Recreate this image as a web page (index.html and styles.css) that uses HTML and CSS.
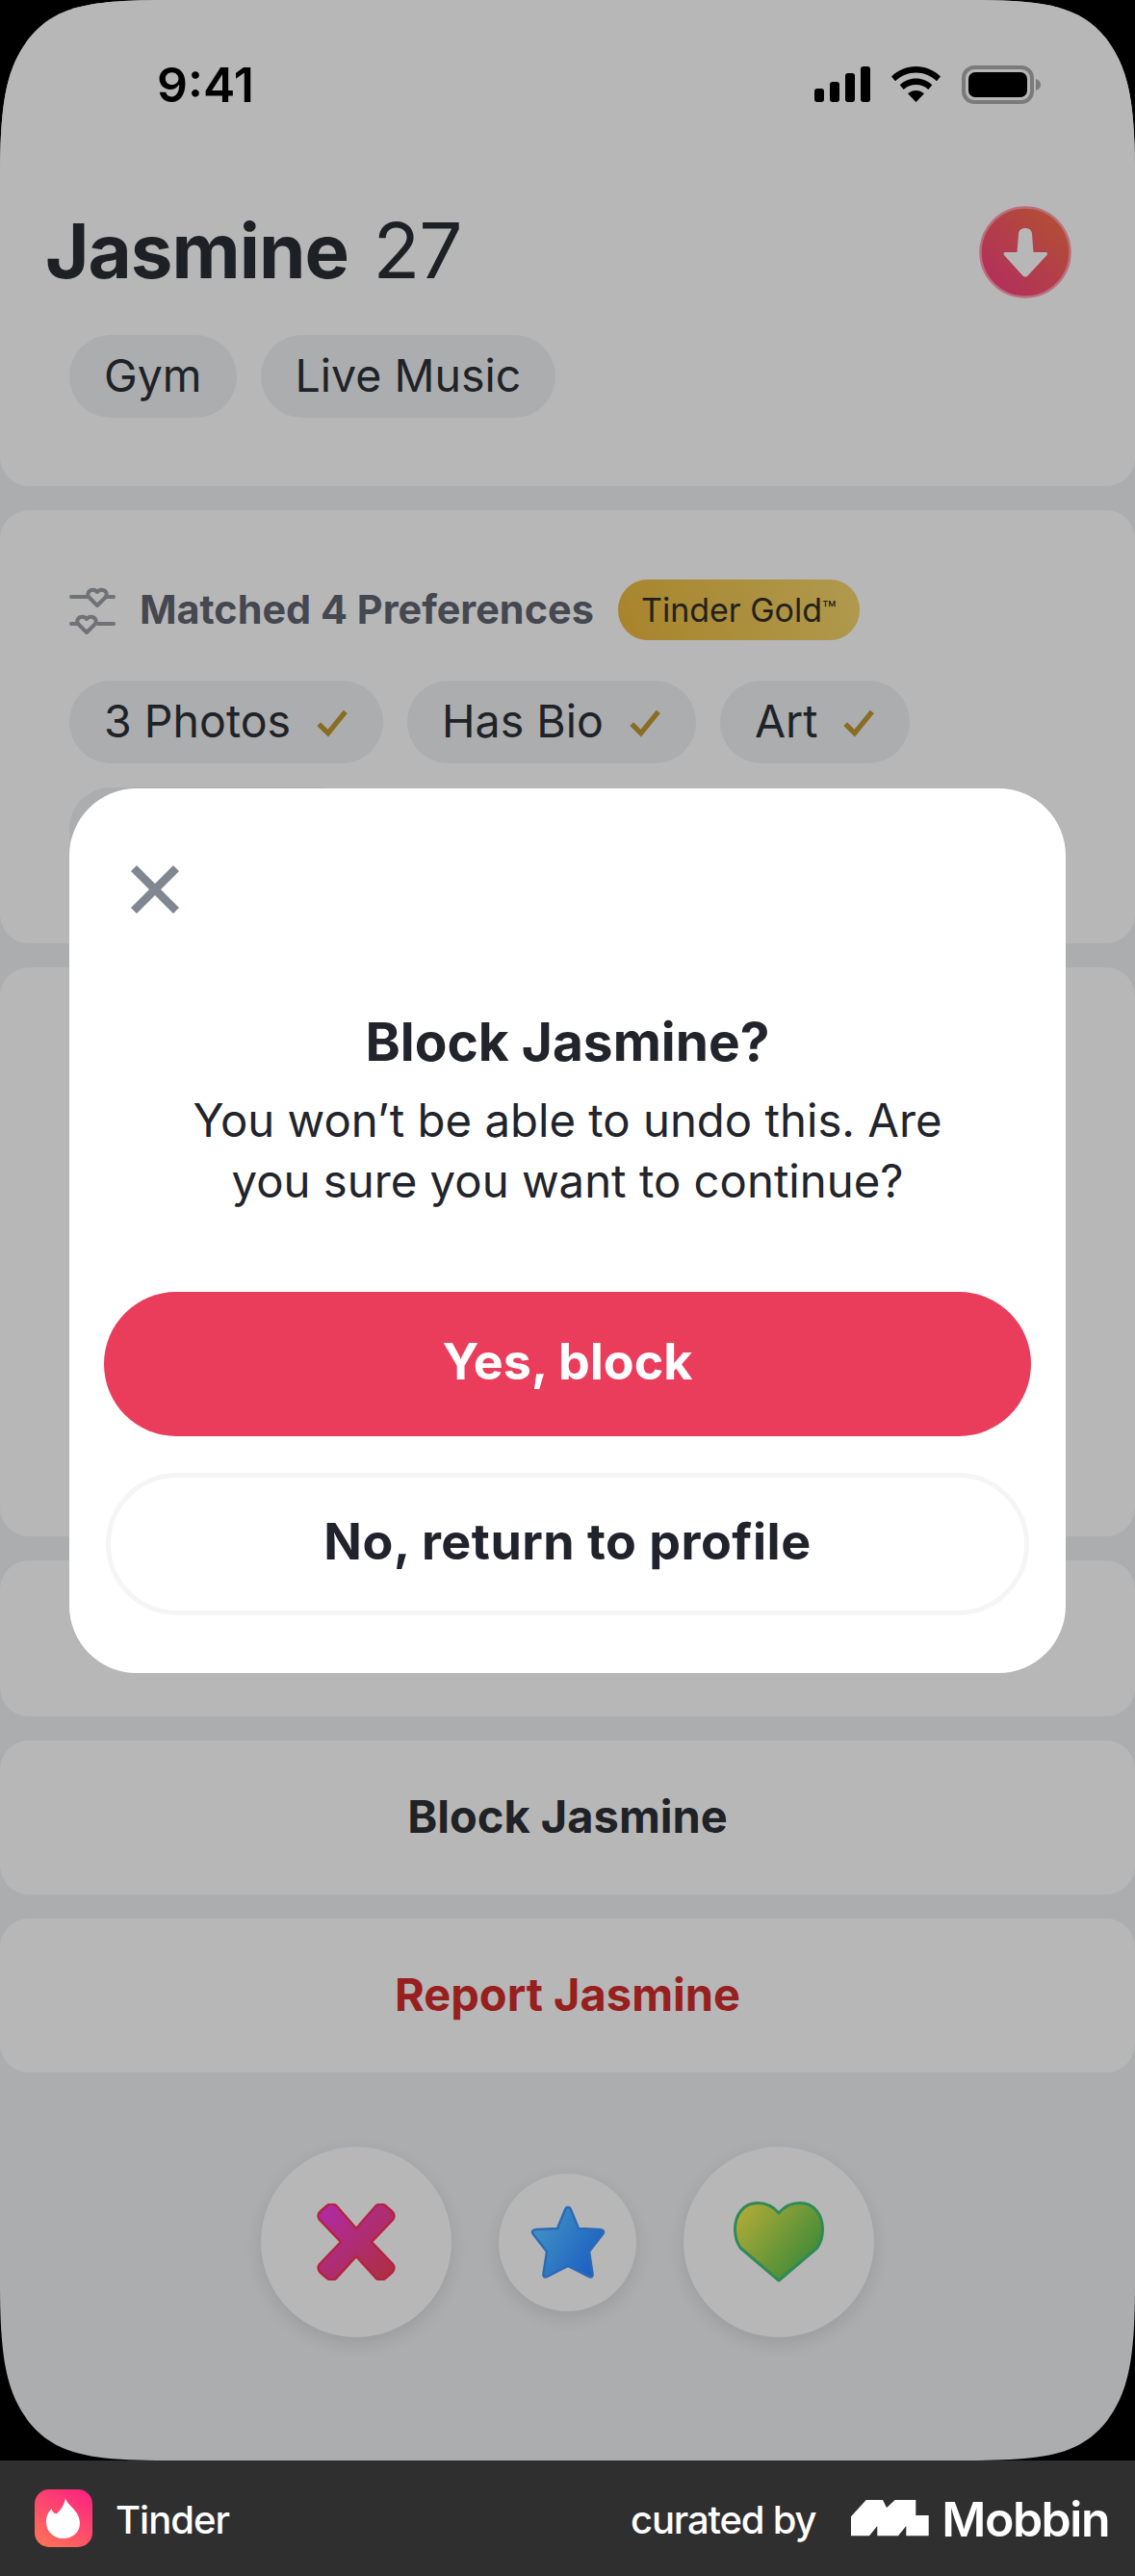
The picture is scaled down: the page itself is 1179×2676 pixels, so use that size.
FILE: index.html
```html
<!DOCTYPE html>
<html lang="en">
<head>
<meta charset="utf-8">
<title>Tinder – Block Jasmine</title>
<link rel="stylesheet" href="styles.css">
</head>
<body>
<main class="phone">
  <section class="card card-profile">
    <div class="status">
      <span class="time">9:41</span>
      <div class="status-icons">
        <svg class="ic-signal" viewBox="0 0 58 37"><rect x="0" y="23" width="10" height="14" rx="3"/><rect x="16" y="16" width="10" height="21" rx="3"/><rect x="32" y="7" width="10" height="30" rx="3"/><rect x="48" y="0" width="10" height="37" rx="3"/></svg>
        <svg class="ic-wifi" viewBox="0 0 51 37"><path d="M25.5 0C35 0 44 3.8 51 10.5l-4 4.7C41 9.6 33.5 6.400 25.500 6.400S10 9.600 4 15.200l-4-4.700C7 3.800 16 0 25.500 0Z"/><path d="M25.500 12.500c6.300 0 12.200 2.400 16.800 6.700l-4 4.700c-3.400-3.200-8-5-12.800-5s-9.400 1.800-12.800 5l-4-4.700c4.600-4.300 10.500-6.700 16.800-6.700Z"/><path d="M25.500 25c3.200 0 6.200 1.200 8.500 3.300L25.500 37 17 28.300c2.300-2.100 5.300-3.300 8.500-3.300Z"/></svg>
        <svg class="ic-battery" viewBox="0 0 82 40"><rect x="2" y="2" width="71" height="36" rx="11" fill="none" stroke="#7b7b7b" stroke-width="4"/><rect x="7" y="7" width="61" height="26" rx="7"/><path d="M77 14c3 1 5 3 5 6s-2 5-5 6Z" fill="#7b7b7b"/></svg>
      </div>
    </div>
    <div class="title-row">
      <h1 class="name">Jasmine <span class="age">27</span></h1>
      <div class="down-btn">
        <svg viewBox="0 0 96 96"><defs><linearGradient id="gd" x1="0.9" y1="0.1" x2="0.15" y2="0.9"><stop offset="0" stop-color="#b24f34"/><stop offset="1" stop-color="#b32f5c"/></linearGradient></defs><circle cx="48" cy="48" r="46.500" fill="url(#gd)" stroke="#bb6f7b" stroke-width="2.500"/><path d="M41 29c0-8 14-8 14 0l1.500 19H69c2 0 2.500 1.500 1.500 3L51 72c-1.700 2-4.300 2-6 0L26 51c-1-1.500-.5-3 1.500-3h12Z" fill="#b7b7b7"/></svg>
      </div>
    </div>
    <div class="chips">
      <span class="chip">Gym</span>
      <span class="chip">Live Music</span>
    </div>
  </section>

  <section class="card card-prefs">
    <div class="pref-head">
      <svg class="ic-prefs" viewBox="0 0 48 50" fill="none" stroke="#6f7276" stroke-width="4" stroke-linecap="round" stroke-linejoin="round"><path d="M2 11h16M40 11h6"/><path d="M29 20l-9-9C17 5 25 1 29 6c4-5 12-1 9 5Z"/><path d="M2 39h5M30 39h16"/><path d="M18 48l-9-9C6 33 14 29 18 34c4-5 12-1 9 5Z"/></svg>
      <span class="pref-title">Matched 4 Preferences</span>
      <span class="gold">Tinder Gold<sup class="tm">™</sup></span>
    </div>
    <div class="chips chips-wrap">
      <span class="chip">3 Photos <svg class="check" viewBox="0 0 32 28"><path d="M3 15l9 9L29 3" fill="none" stroke="#8a6d24" stroke-width="5"/></svg></span>
      <span class="chip">Has Bio <svg class="check" viewBox="0 0 32 28"><path d="M3 15l9 9L29 3" fill="none" stroke="#8a6d24" stroke-width="5"/></svg></span>
      <span class="chip">Art <svg class="check" viewBox="0 0 32 28"><path d="M3 15l9 9L29 3" fill="none" stroke="#8a6d24" stroke-width="5"/></svg></span>
      <span class="chip">Verified <svg class="check" viewBox="0 0 32 28"><path d="M3 15l9 9L29 3" fill="none" stroke="#8a6d24" stroke-width="5"/></svg></span>
    </div>
  </section>

  <section class="card card-blank"></section>
  <section class="card card-action card-tall"></section>
  <section class="card card-action"><span class="act-text">Block Jasmine</span></section>
  <section class="card card-action"><span class="act-text act-report">Report Jasmine</span></section>

  <div class="actions">
    <div class="round round-lg">
      <svg class="ic-x" viewBox="0 0 82 80"><defs><linearGradient id="gx" x1="0" y1="0" x2="1" y2="1"><stop offset="0" stop-color="#b02aab"/><stop offset="1" stop-color="#ae2f3b"/></linearGradient></defs><path d="M41 26 21 3C18 0 14 0 11 2L4 8C1 11 1 14 3 17L25 40 3 63C1 66 1 69 4 72L11 78C14 80 18 80 21 77L41 55 61 77C64 80 68 80 71 78L78 72C81 69 81 66 79 63L57 40 79 17C81 14 81 11 78 8L71 2C68 0 64 0 61 3Z" fill="url(#gx)" stroke="#b3243f" stroke-width="2.500" stroke-linejoin="round"/></svg>
    </div>
    <div class="round round-sm">
      <svg class="ic-star" viewBox="0 0 78 76"><defs><linearGradient id="gs" x1="0" y1="0.2" x2="1" y2="0.8"><stop offset="0" stop-color="#4394c4"/><stop offset="1" stop-color="#1a5cc2"/></linearGradient></defs><path d="M39 2c1.500 0 2.500 1 3 2.500L50 24l22 1c4 .2 5 2.500 3 5L61 48l3.500 23c.5 3-1 4-3.500 3L39 63 17 74c-2.500 1-4 0-3.500-3L17 48 3 30c-2-2.500-1-4.800 3-5l22-1 8-19.500C36.500 3 37.500 2 39 2Z" fill="url(#gs)" stroke="#2a6bb8" stroke-width="2.500"/></svg>
    </div>
    <div class="round round-lg">
      <svg class="ic-heart" viewBox="0 0 94 84"><defs><linearGradient id="gh" x1="0" y1="0.1" x2="1" y2="0.8"><stop offset="0" stop-color="#b3ac37"/><stop offset="1" stop-color="#348738"/></linearGradient></defs><path d="M47 82 7 48C3 42 1.500 35 1.500 29 1.500 13 11 1.500 25 1.500 34 1.500 42 6 47 12 52 6 60 1.500 69 1.500 83 1.500 92.500 13 92.500 29 92.500 35 91 42 87 48Z" fill="url(#gh)" stroke="#2f8a58" stroke-width="3" stroke-linejoin="round"/></svg>
    </div>
  </div>

  <div class="modal">
    <svg class="close" viewBox="0 0 52 52"><path d="M4 4l44 44M48 4 4 48" stroke="#808791" stroke-width="8.500" fill="none"/></svg>
    <h2 class="modal-title">Block Jasmine?</h2>
    <p class="modal-body">You won’t be able to undo this. Are<br>you sure you want to continue?</p>
    <button class="btn btn-yes">Yes, block</button>
    <button class="btn btn-no">No, return to profile</button>
  </div>
</main>

<footer class="footer">
  <div class="foot-left">
    <svg class="app-icon" viewBox="0 0 60 60"><defs><linearGradient id="gt" x1="0.8" y1="0" x2="0.2" y2="1"><stop offset="0" stop-color="#fd2480"/><stop offset="1" stop-color="#fe7158"/></linearGradient></defs><rect width="60" height="60" rx="15" fill="url(#gt)"/><path d="M32 9C33 16 47 22 47 35 47 45 39 51 29.500 51 20 51 12 44 12 34 12 28 14 24 17.500 20 18 23 20 25 22.500 25.500 27 22 31 16 32 9Z" fill="#fff"/></svg>
    <span class="app-name">Tinder</span>
  </div>
  <div class="foot-right">
    <span class="curated">curated by</span>
    <svg class="mobbin-mark" viewBox="0 0 81 38"><path d="M15.700 0H33L37 8 45.700 0H67.300V16H80.700V37.300H57.300V27L49 37.300H27.300V27L19 37.300H0V17.300Z" fill="#fff"/></svg>
    <span class="mobbin">Mobbin</span>
  </div>
</footer>
</body>
</html>
```

FILE: styles.css
```css
* { box-sizing: border-box; }
html, body { margin: 0; padding: 0; }
body {
  width: 1179px;
  height: 2676px;
  background: #000;
  font-family: "Inter", "Liberation Sans", sans-serif;
  color: #1f2226;
  overflow: hidden;
}
.phone {
  position: relative;
  width: 1179px;
  height: 2556px;
  background: #abadaf;
  overflow: hidden;
  clip-path: path("M184 0C100 0 60 3 30 40 8 70 0 100 0 184V2372C0 2456 8 2486 30 2516 60 2553 100 2556 184 2556H995C1079 2556 1119 2553 1149 2516 1171 2486 1179 2456 1179 2372V184C1179 100 1171 70 1149 40 1119 3 1079 0 995 0Z");
  display: flex;
  flex-direction: column;
  gap: 25px;
}
.card { background: #b7b7b7; border-radius: 30px; width: 100%; }
.card-profile { height: 505px; padding: 0 48px; }
.status {
  height: 176px;
  display: flex;
  justify-content: space-between;
  align-items: flex-start;
  padding: 60px 0 0 115px;
}
.time { font-weight: 600; font-size: 50px; line-height: 56px; color: #000; }
.status-icons { display: flex; align-items: flex-start; gap: 22px; padding: 8px 50px 0 0; }
.status-icons svg { display: block; fill: #000; }
.ic-signal { width: 58px; height: 37px; margin-top: 1px; }
.ic-wifi { width: 51px; height: 37px; margin-top: 1px; }
.ic-battery { width: 82px; height: 40px; }
.title-row { display: flex; justify-content: space-between; align-items: flex-start; height: 172px; padding-top: 38px; }
.name { margin: 0 0 0 -1px; font-size: 78px; line-height: 92px; font-weight: 700; color: #1d2024; letter-spacing: -1px; }
.age { font-weight: 400; margin-left: 8px; font-size: 80px; }
.down-btn { width: 96px; height: 96px; margin-right: 18px; }
.down-btn svg { display: block; width: 96px; height: 96px; }
.chips { display: flex; flex-wrap: wrap; gap: 25px; padding-left: 24px; }
.chip {
  height: 86px;
  border-radius: 43px;
  background: #abadaf;
  display: inline-flex;
  align-items: center;
  gap: 26px;
  padding: 0 36px 2px;
  font-size: 46.500px;
  color: #1f2226;
  white-space: nowrap;
}
.check { width: 34px; height: 30px; display: block; margin-top: 4px; }
.card-prefs { height: 450px; padding: 72px 0 0 48px; }
.pref-head { display: flex; align-items: center; gap: 25px; padding-left: 24px; height: 63px; }
.ic-prefs { width: 48px; height: 50px; display: block; }
.pref-title { font-size: 41.400px; font-weight: 700; color: #454850; margin-top: -2px; }
.gold {
  height: 63px;
  width: 251px;
  border-radius: 31px;
  background: linear-gradient(70deg, #a8842b, #b09a4e);
  display: inline-flex;
  align-items: center;
  justify-content: center;
  font-size: 34px;
  color: #22221c;
}
.tm { font-size: 24px; line-height: 0; vertical-align: 10px; }
.chips-wrap { margin-top: 42px; width: 960px; }
.card-blank { height: 591px; }
.card-action { height: 160px; display: flex; align-items: center; justify-content: center; padding-bottom: 3px; }
.card-tall { height: 162px; }
.act-text { font-size: 47px; font-weight: 700; color: #1f2226; }
.act-report { color: #97201f; }
.actions { display: flex; justify-content: center; align-items: center; gap: 49px; margin-top: 52px; }
.round {
  border-radius: 50%;
  background: #b7b7b7;
  display: flex;
  align-items: center;
  justify-content: center;
  box-shadow: 0 6px 18px rgba(0,0,0,.1);
}
.round-lg { width: 198px; height: 198px; }
.round-sm { width: 143px; height: 143px; }
.ic-x { width: 82px; height: 80px; display: block; }
.ic-star { width: 78px; height: 76px; display: block; }
.ic-heart { width: 94px; height: 84px; display: block; }
.modal {
  position: absolute;
  left: 72px;
  top: 819px;
  width: 1035px;
  height: 919px;
  background: #fff;
  border-radius: 70px;
  padding: 79px 36px 0;
  display: flex;
  flex-direction: column;
  align-items: center;
}
.close { align-self: flex-start; width: 52px; height: 52px; display: block; margin-left: 27px; }
.modal-title { margin: 98px 0 0; font-size: 55px; line-height: 68px; font-weight: 700; color: #22242c; }
.modal-body { margin: 16px 0 0; font-size: 47.300px; line-height: 63px; text-align: center; color: #22242c; }
.btn {
  display: block;
  font-family: inherit;
  font-weight: 700;
  font-size: 52px;
  border-radius: 76px;
  text-align: center;
  padding: 0 0 6px;
}
.btn-yes { width: 963px; height: 150px; margin-top: 84px; background: #ea3d5c; border: 0; color: #fff; }
.btn-no { width: 959px; height: 148px; margin-top: 38px; background: #fff; border: 5px solid #f5f5f6; color: #21232c; letter-spacing: .5px; }
.footer {
  height: 120px;
  background: #2f2f2f;
  display: flex;
  justify-content: space-between;
  align-items: center;
  padding: 2px 27px 0 36px;
  color: #fff;
}
.foot-left, .foot-right { display: flex; align-items: center; }
.app-icon { width: 60px; height: 60px; display: block; margin-top: -2px; }
.app-name { margin-left: 24px; font-size: 40px; font-weight: 500; letter-spacing: -1px; }
.curated { font-size: 40px; font-weight: 500; letter-spacing: -1.2px; margin-right: 37px; }
.mobbin-mark { width: 81px; height: 38px; display: block; margin-top: -2px; }
.mobbin { font-size: 50px; font-weight: 600; letter-spacing: -1.5px; margin-left: 13px; }
```
